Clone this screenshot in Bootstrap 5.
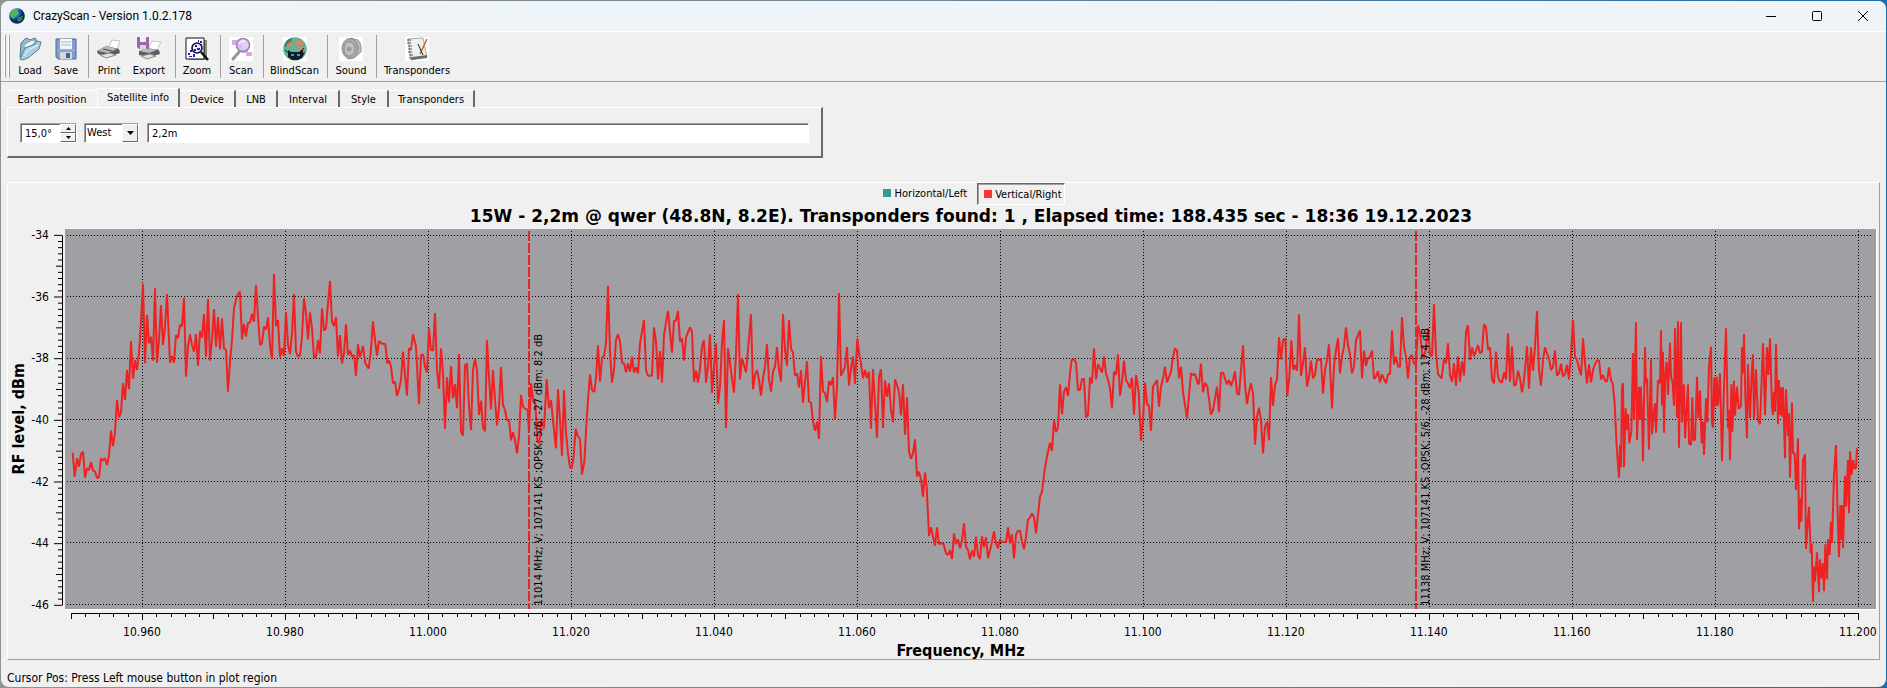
<!DOCTYPE html>
<html lang="en">
<head>
<meta charset="utf-8">
<meta name="viewport" content="width=device-width, initial-scale=1">
<title>CrazyScan - Version 1.0.2.178</title>
<link href="https://cdn.jsdelivr.net/npm/bootstrap@5.3.0/dist/css/bootstrap.min.css" rel="stylesheet">
<style>
  :root { --face:#f0f0f0; --shade:#a0a0a0; --dark:#696969; }
  body { background:linear-gradient(90deg,#8f9396 0,#6f8494 50%,#1f6ba8 100%); font-family:"DejaVu Sans Condensed","Noto Sans",sans-serif; font-size:11px; line-height:14px; color:#000; padding:1px; }
  .app-window { background:var(--face); border-radius:8px; overflow:hidden; min-height:calc(100vh - 2px); }
  .title-bar { height:31px; background:#eff4f9; border-bottom:1px solid #fff; font-family:Roboto,sans-serif; padding:0 0 1px 8px; }
  .title-bar h1 { font-size:12px; line-height:16px; font-weight:400; }
  .caption-btn { width:46px; height:28px; border:0; background:none; padding:0; }
  .tool-bar { height:50px; padding:3px 3px 3px; border-bottom:1px solid var(--shade); }
  .grip { width:2px; border-left:1px solid #fff; border-right:1px solid var(--shade); margin-right:2px; }
  .tool-btn { border:0; background:none; padding:1px 0 0; line-height:14px; color:#000; white-space:nowrap; }
  .tool-btn svg { display:block; margin:0 auto 3px; }
  .tool-sep { width:1px; background:var(--shade); margin:0 2px 0 4px; }
  .settings { padding:7px 7px 0 6px; }
  .tab-row { height:18px; }
  .tab-btn { border:0; border-top:1px solid #fff; border-right:2px solid var(--dark); background:var(--face); height:17px; padding:2px 0 0; color:#000; line-height:14px; flex:none; }
  .tab-btn.active { height:19px; border-left:1px solid #fff; position:relative; z-index:1; padding-bottom:2px; }
  .tab-btn.first { border-right:0; }
  .tab-page { width:816px; max-width:100%; height:51px; padding:15px 12px 0; border-top:1px solid #fff; border-left:1px solid #fff; border-right:2px solid var(--dark); border-bottom:2px solid var(--dark); }
  .sunken { background:#fff; border:1px solid; border-color:var(--shade) #fff #fff var(--shade); box-shadow:inset 1px 1px 0 var(--dark); height:20px; }
  .sunken input, .sunken select { border:0; background:transparent; outline:0; font:inherit; color:#000; padding:0 0 0 4px; width:100%; min-width:0; height:18px; appearance:none; border-radius:0; }
  .raised { background:var(--face); border:1px solid; border-color:#fff var(--dark) var(--dark) #fff; padding:0; display:flex; align-items:center; justify-content:center; }
  .chart-frame { border:1px solid; border-color:#fff var(--shade) var(--shade) #fff; margin:0 6px; }
  .legend-btn { border:1px solid transparent; background:none; height:22px; padding:0 2px 0 6px; color:#000; }
  .legend-btn i { display:inline-block; width:8px; height:8px; }
  .legend-btn.down { border-color:var(--dark) #fff #fff var(--dark); box-shadow:inset 1px 1px 0 var(--shade); padding-top:2px; }
  .chart-title { font-family:"DejaVu Sans",sans-serif; font-size:17px; line-height:22px; font-weight:700; margin:0; }
  .axis-title { font-size:16px; line-height:17px; font-weight:700; }
  .axis-y-title { width:21px; line-height:21px; writing-mode:vertical-rl; transform:rotate(180deg); }
  .axis-num { font-size:12px; line-height:14px; }
  .y-labels { width:26px; padding-right:6px; }
  .y-labels > span { height:0; display:flex; align-items:center; justify-content:flex-end; }
  .x-labels { padding-left:4.25%; padding-right:1%; height:14px; }
  .x-labels > span { width:0; display:flex; justify-content:center; }
  .plot { background:#a0a0a4; border-right:1px solid #fff; border-bottom:1px solid #fff; }
  .plot svg, .y-scale svg { position:absolute; inset:0; width:100%; height:100%; }
  .y-scale svg { overflow:visible; }
  .stretch * { vector-effect:non-scaling-stroke; }
  .grid-lines { stroke:#000; stroke-dasharray:1 2; fill:none; }
  .trace { stroke:#ee2222; stroke-width:2; fill:none; stroke-linejoin:bevel; }
  .marker { position:absolute; top:2px; bottom:0; width:18px; }
  .marker::before { content:""; position:absolute; left:0; top:0; bottom:0; width:2px; background:repeating-linear-gradient(#e02828 0 10px,transparent 10px 12px); }
  .marker span { position:absolute; left:4px; bottom:3px; writing-mode:vertical-rl; transform:rotate(180deg); white-space:nowrap; line-height:14px; font-size:11px; }
  .status { height:27px; padding:11px 6px 0; font-size:12px; }
</style>
</head>
<body>
<div class="app-window d-flex flex-column">
  <header class="title-bar d-flex align-items-center">
    <svg width="16" height="16" viewBox="0 0 16 16" aria-hidden="true"><defs><radialGradient id="globe" cx=".35" cy=".3"><stop offset="0" stop-color="#7fd0ff"/><stop offset=".5" stop-color="#2878c8"/><stop offset="1" stop-color="#0a2a66"/></radialGradient></defs><circle cx="8" cy="8" r="7.8" fill="url(#globe)"/><path d="M2 4 Q5 0 9 1 L8 4 L10 6 L6 8 L5 11 L2 9 L1 7Z" fill="#5cb548"/><path d="M10 9 L14 8 L13 12 L10 14 L8 12Z" fill="#2f8a3c"/></svg>
    <h1 class="mb-0 ms-2 ps-0 flex-grow-1">CrazyScan - Version 1.0.2.178</h1>
    <button class="caption-btn" aria-label="Minimize"><svg width="10" height="10" viewBox="0 0 10 10"><path d="M0 5.5H10" stroke="#000"/></svg></button>
    <button class="caption-btn" aria-label="Maximize"><svg width="10" height="10" viewBox="0 0 10 10"><rect x=".5" y=".5" width="9" height="9" rx="1" fill="none" stroke="#000"/></svg></button>
    <button class="caption-btn" aria-label="Close"><svg width="10" height="10" viewBox="0 0 10 10"><path d="M0 0L10 10M10 0L0 10" stroke="#000"/></svg></button>
  </header>

  <nav class="tool-bar d-flex" aria-label="Tools">
    <div class="grip"></div><div class="grip"></div>
    <button class="tool-btn" style="width:36px"><svg width="24" height="24" viewBox="0 0 24 24"><path d="M3 6 L8 1 L12 3 L17 1 L19 4 L19 9 L5 22 L2 20Z" fill="#8fb9cf" stroke="#54788c"/><path d="M6 8 L14 3 L18 5 L8 13Z" fill="#eef7fb" stroke="#8aa"/><path d="M2 22 L7 11 L17 7 L19 4 L23 5 L21 12 L10 21 L4 23Z" fill="#a9cfe2" stroke="#557d92"/><path d="M6 19 L10 13 L20 8" fill="none" stroke="#e9f7ff"/></svg>Load</button>
    <button class="tool-btn" style="width:36px"><svg width="24" height="24" viewBox="0 0 24 24"><path d="M2 2H22V22H4L2 20Z" fill="#7f9fcd" stroke="#4f688f"/><rect x="6" y="2" width="12" height="10" fill="#f4f7fa"/><path d="M7 5H17M7 8H17" stroke="#a9b4c2"/><rect x="6" y="15" width="12" height="7" fill="#d3d8dd"/><rect x="12" y="16" width="4" height="5" fill="#35639c"/><path d="M3 13H21" stroke="#9fbbe2"/></svg>Save</button>
    <div class="tool-sep"></div>
    <button class="tool-btn" style="width:36px"><svg width="24" height="24" viewBox="0 0 24 24"><path d="M11 12 L15 3 L23 4 L20 13Z" fill="#fff" stroke="#c5c5c5"/><path d="M0 14 L9 9 L22 12 L23 16 L11 20 L1 17Z" fill="#5c5c5c"/><path d="M1 14 L9 9 L20 12 L11 16Z" fill="#b9b9b9"/><path d="M3 18 L13 16 L19 18 L9 21Z" fill="#dfe3df" stroke="#888"/><path d="M6 12L15 14" stroke="#444"/></svg>Print</button>
    <button class="tool-btn" style="width:44px"><svg width="24" height="24" viewBox="0 0 24 24"><path d="M11 12 L15 4 L24 5 L20 13Z" fill="#fff" stroke="#c5c5c5"/><path d="M2 14 L9 11 L22 13 L23 17 L12 20 L2 18Z" fill="#5c5c5c"/><path d="M2 14 L9 11 L20 13 L12 16Z" fill="#b9b9b9"/><path d="M4 19 L13 17 L19 19 L10 22Z" fill="#dfe3df" stroke="#888"/><path d="M0 0H12V12H2L0 10Z" fill="#9a68a8"/><rect x="3" y="0" width="6" height="5" fill="#f6eaf8"/><rect x="3" y="8" width="6" height="4" fill="#e2cfe7"/></svg>Export</button>
    <div class="tool-sep"></div>
    <button class="tool-btn" style="width:38px"><svg width="24" height="24" viewBox="0 0 24 24"><path d="M4 3H22V23H4Z" fill="#888"/><path d="M1 1H19V22H1Z" fill="#fff" stroke="#111"/><path d="M3 16h2v2H3zM5 13h2v2H5zM15 4h2v2h-2zM13 3h1v2h-1zM4 19h3v1H4zM8 17h2v3H8zM16 7h1v2h-1z" fill="#1a1ae0"/><circle cx="12" cy="11" r="5" fill="#e5eaff" stroke="#111" stroke-width="1.600"/><path d="M10 8h2v2h-2zM12 11h3v2h-3zM9 12h2v2H9z" fill="#1a1ae0"/><path d="M16 15L23 23" stroke="#111" stroke-width="2.500"/></svg>Zoom</button>
    <div class="tool-sep"></div>
    <button class="tool-btn" style="width:36px"><svg width="24" height="24" viewBox="0 0 24 24"><rect width="24" height="24" fill="#fff"/><path d="M3 3h5v4h5v5h6v3h4v4h-6v-3h-5v-5H7V8H3z" fill="#dfa5ec"/><path d="M10 15L4 22" stroke="#9c9099" stroke-width="3" stroke-linecap="round"/><circle cx="14" cy="8" r="6.5" fill="#dcc4f4" fill-opacity=".8" stroke="#8f8ba8" stroke-width="1.6"/><path d="M10 7Q12 3 16 4" stroke="#fff" fill="none"/></svg>Scan</button>
    <div class="tool-sep"></div>
    <button class="tool-btn" style="width:57px"><svg width="24" height="24" viewBox="0 0 24 24"><rect width="24" height="24" fill="#fff"/><circle cx="12" cy="12" r="11.8" fill="#62b296"/><path d="M1 9Q3 2 9 1L8 5L4 10Z" fill="#437d65"/><path d="M3 8l4-3 4 0-2 3-4 2zM12 4l6-1 3 3-4 2-4-1zM14 9l5 0 3 3-5 0z" fill="#dd8560"/><path d="M5 13l3 2h8l4-3v4l2-1-3 6-4 2h-6l-4-3z" fill="#101e24"/><path d="M8 17h3v2H8zM14 17h3v2h-3z" fill="#2f9cf0"/><path d="M2 13l5 4M21 11l-4 5" stroke="#101e24"/></svg>BlindScan</button>
    <div class="tool-sep"></div>
    <button class="tool-btn" style="width:42px"><svg width="24" height="24" viewBox="0 0 24 24"><rect width="24" height="24" fill="#fff"/><path d="M12 1 L19 3 Q23 7 22 15 L15 21 L9 22Z" fill="#b9b9b9" stroke="#999"/><ellipse cx="11" cy="11.500" rx="8" ry="10" fill="#a9aaac" stroke="#8b8b8b"/><ellipse cx="10.500" cy="12" rx="5.500" ry="7" fill="#c0c1c3" stroke="#8b8b8b"/><circle cx="10" cy="12" r="2.500" fill="#9a9c9e"/></svg>Sound</button>
    <div class="tool-sep"></div>
    <button class="tool-btn" style="width:76px"><svg width="24" height="24" viewBox="0 0 24 24"><rect width="24" height="24" fill="#fff"/><path d="M3 2L18 1L22 20L6 23Z" fill="#edf0ee" stroke="#aaa"/><path d="M6 23L22 21V18L7 20Z" fill="#657066"/><path d="M2 3h4M2 6h4M3 9h4M3 12h4M3 15h4M4 18h4M4 21h4" stroke="#555"/><path d="M22 2L15 17" stroke="#c2602d" stroke-width="1.500"/><path d="M13 7L18 18" stroke="#222"/></svg>Transponders</button>
  </nav>

  <section class="settings">
    <div class="tab-row d-flex align-items-end" role="tablist">
      <button role="tab" class="tab-btn first" style="width:90px">Earth position</button>
      <button role="tab" class="tab-btn active" aria-selected="true" style="width:83px">Satellite info</button>
      <button role="tab" class="tab-btn" style="width:56px">Device</button>
      <button role="tab" class="tab-btn" style="width:42px">LNB</button>
      <button role="tab" class="tab-btn" style="width:62px">Interval</button>
      <button role="tab" class="tab-btn" style="width:49px">Style</button>
      <button role="tab" class="tab-btn" style="width:86px">Transponders</button>
    </div>
    <div class="tab-page d-flex" role="tabpanel">
      <div class="sunken d-flex" style="width:57px">
        <input type="text" aria-label="Orbital position" value="15,0°">
        <div class="d-flex flex-column flex-shrink-0 h-100" style="width:16px">
          <button class="raised flex-fill" aria-label="Up"><svg width="5" height="3" viewBox="0 0 5 3"><path d="M0 3L2.500 0L5 3Z"/></svg></button>
          <button class="raised flex-fill" aria-label="Down"><svg width="5" height="3" viewBox="0 0 5 3"><path d="M0 0H5L2.500 3Z"/></svg></button>
        </div>
      </div>
      <div class="sunken d-flex" style="width:55px;margin-left:7px">
        <select aria-label="Hemisphere" style="padding-left:2px"><option>West</option><option>East</option></select>
        <span class="raised flex-shrink-0" style="width:16px"><svg width="7" height="4" viewBox="0 0 7 4"><path d="M0 0H7L3.500 4Z"/></svg></span>
      </div>
      <div class="sunken flex-fill" style="margin-left:8px"><input type="text" aria-label="Antenna" value="2,2m"></div>
    </div>
  </section>

  <main class="chart-frame flex-grow-1 d-flex flex-column mt-4">
    <div class="d-flex justify-content-center" style="padding-left:54px;gap:7px">
      <button class="legend-btn"><i style="background:#339999"></i> Horizontal/Left</button>
      <button class="legend-btn down"><i style="background:#ff3333"></i> Vertical/Right</button>
    </div>
    <div class="flex-grow-1 d-flex">
      <div class="d-flex align-items-center" style="padding-bottom:26px"><div class="axis-title axis-y-title">RF level, dBm</div></div>
      <div class="flex-grow-1 d-flex flex-column" style="margin-right:2px">
        <h2 class="chart-title text-center" style="padding-left:36px;margin-bottom:2px">15W - 2,2m @ qwer (48.8N, 8.2E). Transponders found: 1 , Elapsed time: 188.435 sec - 18:36 19.12.2023</h2>
        <div class="d-flex flex-grow-1">
          <div class="y-labels axis-num d-flex flex-column justify-content-between" style="margin:6px 0 5px">
            <span>-34</span><span>-36</span><span>-38</span><span>-40</span><span>-42</span><span>-44</span><span>-46</span>
          </div>
          <div class="y-scale position-relative" style="width:10px"><svg class="stretch" viewBox="0 0 10 1140" preserveAspectRatio="none" shape-rendering="crispEdges"><path id="yTicks" stroke="#000" fill="none"/></svg></div>
          <div class="plot flex-grow-1 position-relative">
            <svg class="stretch" viewBox="0 0 5433 1140" preserveAspectRatio="none">
              <path id="gridX" class="grid-lines" shape-rendering="crispEdges"/><path id="gridY" class="grid-lines" shape-rendering="crispEdges"/>
              <g class="trace">
                <polyline transform="translate(-195 -57)" points="218,728 224,800 231,745 237,770 243,732 249,725 255,803 261,775 267,780 273,757 279,782 285,784 291,804 297,802 303,745 309,752 315,745 321,765 327,737 333,662 339,708 345,668 351,570 357,622 363,608 369,519 375,570 381,480 387,538 393,393 399,507 405,450 411,480 417,430 421,370 429,222 435,460 441,315 447,400 453,380 459,452 465,235 471,458 477,390 483,285 489,405 495,350 501,252 510,458 516,438 522,458 528,375 534,384 540,345 546,348 552,264 558,500 564,410 570,373 576,405 582,425 588,372 594,467 600,363 606,383 612,312 618,440 624,267 630,452 636,390 642,297 648,410 654,321 660,418 666,325 672,415 678,420 684,545 690,455 696,390 702,295 711,258 720,245 726,388 732,342 738,380 744,338 750,338 756,312 762,335 768,225 774,320 780,405 786,400 792,350 798,358 804,322 810,405 816,448 822,192 828,348 834,330 840,442 846,415 852,437 858,307 864,405 870,432 876,370 882,252 888,425 894,440 900,436 906,380 912,265 918,310 924,388 930,307 936,355 942,442 948,442 954,390 960,430 966,295 972,362 978,355 984,280 990,213 996,335 1002,348 1008,322 1014,440 1020,375"/>
                <polyline transform="translate(825 -27)" points="0,345 6,430 12,400 18,313 24,405 30,392 36,410 42,405 48,467 54,373 60,412 69,378 76,430 86,446 92,400 99,304 105,360 111,407 117,363 124,370 136,373 142,430 148,422 153,440 159,490 165,485 171,528 177,508 183,480 189,395 195,465 201,527 207,385 213,390 219,343 228,380 237,553 243,405 249,403 255,440 261,457 267,325 273,390 279,392 285,279 291,450 297,506 303,385 309,460 315,626 321,472 327,547 333,438 339,535 345,493 351,565 357,402 363,635 369,647 375,437 381,430 387,560 393,630 399,450 405,417 411,450 417,585 423,542 429,622 435,634 441,361 447,470 453,568 459,450 465,540 471,616 477,560 483,441 489,555 495,570 501,602 507,598 513,661 519,637 525,660 531,700 537,650 543,525 549,560 555,566 563,570 567,635 573,490 580,545 586,550 592,660 598,672 604,600 612,625 620,478 627,565 633,540 640,610 648,685 654,508 660,600 666,707 672,510 678,640 684,700 690,743 695,745 701,710 707,626 713,648 720,657 726,764 733,725 740,600 744,540 750,463 756,510 763,516 768,475 774,376 780,485 786,412 792,410 798,370 804,198 810,395 816,488 822,450 828,360 834,343 840,365 846,428 852,430 858,457 864,430 870,455 876,410 882,458 888,442 894,460 900,370 912,300 918,450 924,467 936,467 942,322 948,365 954,478 960,393 966,488 972,345 984,273"/>
                <polyline transform="translate(1485 -27)" points="324,273 336,398 342,303 348,302 354,273 360,365 366,355 372,422 378,352 390,322 396,335 402,485 408,452 414,488 420,445 426,380 432,361 438,488 444,440 450,343 456,518 462,440 468,370 474,551 480,500 486,370 492,300 498,624 504,385 510,430 516,475 522,518 528,400 534,222 540,478 546,415 552,435 558,457 564,390 573,283 579,508 585,465 591,450 597,480 603,527 609,475 615,440 621,373 627,480 633,515 639,455 645,440 651,381 657,450 663,485 669,283 675,390 681,437 687,300 693,385 699,398 705,467 711,460 717,502 723,451 729,548 735,485 741,424 747,545 753,548 759,605 765,632 771,605 777,657 783,409 789,515 795,518 801,547 807,483 813,495 819,472 825,600 831,500 837,219 843,467 849,455 855,440 861,381 867,497 873,445 879,409 885,491 892,355 898,405 903,430 909,475 915,450 921,475 927,455 933,626 939,447 951,653 957,470 963,448 969,624 975,482 981,530 987,490 993,570 999,607 1005,478 1011,495 1017,515"/>
                <polyline transform="translate(2445 93)" points="57,395 63,466 69,373 75,524 81,412 87,575 93,597 99,580 105,538 111,650 117,635 123,660 129,710 135,638 140,680 147,828 153,802 165,857 171,802 177,852 190,850 198,880 204,885 210,870 216,897 222,820 228,852 234,838 240,865 246,840 252,790 258,860 264,870 270,898 276,872 282,890 288,830 294,885 300,897 306,829 312,862 318,832 324,895 330,870 336,845 342,814 348,850 354,865 360,838 366,846 378,847 384,802 390,850 396,823 402,895 408,825 414,812 420,812 426,845 432,867 438,830 444,780 450,772 456,760 462,772 468,820 474,765 480,710 486,695 495,622 504,575 510,548 516,573 522,480 528,516 534,503 540,373 546,463 552,395 558,382 564,408 570,340 575,300 581,297 588,307 594,390 600,390 606,357 612,357 618,472 624,465 630,352 636,370 642,265 648,358 654,313 660,325 666,338 672,290 678,340 684,360 690,385 696,445 702,335 708,345 714,283 720,407 726,365 732,302 738,360 744,370 750,385 756,353 762,464 768,345 776,395 783,542 789,480 795,367 801,432 807,438 813,512 819,380 831,360 837,440 843,380 850,350 855,320 861,367 873,335 879,290 885,265 891,272 897,355 903,320 909,395 921,475 933,340 939,345 945,342 954,373 957,370 963,311 969,397 975,368 982,380 993,464 999,450 1005,415 1011,380 1017,457 1023,338 1029,338 1041,373 1047,360 1053,378 1059,360 1065,334 1071,400 1077,405"/>
                <polyline transform="translate(2925 93)" points="597,405 609,256 615,375 621,432 627,395 633,370 639,400 645,554 651,470 657,443 663,480 669,580 675,500 681,485 687,541 693,352 699,437 705,375 711,358 717,232 723,298 729,240 736,235 742,408 748,350 754,241 760,330 765,315 771,332 777,163 783,348 789,310 795,262 801,380 807,350 813,302 819,355 825,345 831,298 837,300 843,297 849,401 855,330 861,300 867,253 876,445 882,320 888,270 894,235 900,340 906,290 912,260 918,202 924,255 930,285 936,340 942,320 948,240 960,211 966,355 972,272 978,318 984,295 990,290 996,272 1002,357 1008,350 1014,333 1020,367 1026,343 1032,357 1038,370 1044,343 1050,342 1056,211 1062,313 1068,290 1074,320 1080,320 1086,171 1092,260 1098,290 1104,355 1110,290 1116,285 1122,310 1128,315"/>
                <polyline transform="translate(4005 -27)" points="48,435 54,316 60,340 66,395 72,418 78,380 84,325 90,405 96,408 102,252 108,400 114,462 125,475 132,418 138,430 144,370 150,465 156,485 162,430 168,497 174,409 180,485 186,424 192,466 198,335 204,316 210,420 216,382 222,409 234,375 240,400 246,395 252,313 258,320 264,390 270,382 276,478 282,490 288,395 294,470 300,485 306,488 312,457 318,478 324,340 330,485 336,379 342,497 348,493 354,452 360,475 366,517 372,480 381,379 387,506 393,382 399,452 405,380 411,273 417,450 423,497 429,420 435,382 441,400 447,415 453,450 459,440 465,391 471,467 477,460 483,432 489,470 495,462 501,435 507,478 513,400 519,300 525,410 531,420 537,445 543,466 549,355 555,430 561,490 567,433 573,487 579,450 585,432 591,422 597,420"/>
                <polyline transform="translate(4485 93)" points="117,300 123,358 129,345 135,362 141,365 147,322 153,360 158,370 164,430 170,560 177,653 180,555 183,622 186,380 189,370 192,622 197,445 201,510 204,462 208,550 214,515 219,280 222,480 228,187 231,541 237,380 240,480 242,380 246,450 249,604 255,262 258,370 261,355 267,569 273,298 276,523 282,450 285,430 288,518 294,360 300,370 303,211 306,437 309,275 312,518 316,340 320,305 324,405 330,248 333,350 338,370 342,437 345,205 351,473 354,184 357,563 363,187 366,487 372,373 375,535 381,430 384,373 387,550 393,555 397,412 400,540 405,540 411,350 415,475 420,392 425,550 429,485 432,585 438,415 442,487 447,320 453,260 456,490 459,503 463,352 467,440 470,350 474,437 480,340 486,604 492,380 498,205 504,505 507,450 510,601 514,373 517,515 522,362 525,467 531,380 536,447 543,437 546,262 549,340 552,223 556,410 561,535 564,313 570,475 575,340 579,283 582,478 588,328 594,480 600,493 609,250 615,466 621,262 625,345 630,235 636,440 639,465 642,395 645,455 648,253 654,493 657,360 660,465 663,382 666,470 669,382 675,595 678,388 684,527 687,460 690,653 696,428 699,580 704,580 708,691 714,535 717,808 722,715 724,785 729,600 735,583 738,867 743,790 747,740 752,880 755,850 759,1025 762,920 765,965 771,877 777,997 780,898 785,955 789,910 792,994 796,853 801,958 804,838 809,885 813,785 816,848 822,645 828,555 832,735 837,892 841,735 845,840 846,735 849,865 855,647 858,740 864,600 867,760 870,574 875,645 879,600 884,627 888,622 891,565"/>
              </g>
            </svg>
            <div class="marker" style="left:25.55%"><span>11014 MHz; V; 107141 KS ;QPSK; 5/6; -27 dBm; 8.2 dB</span></div>
            <div class="marker" style="left:74.55%"><span>11138 MHz; V; 107141 KS ;QPSK; 5/6; -28 dBm; 17.4 dB</span></div>
          </div>
        </div>
        <div style="padding:2px 1px 3px 36px">
          <svg class="stretch d-block w-100" height="9" viewBox="0 0 5433 9" preserveAspectRatio="none" shape-rendering="crispEdges"><path id="xTicks" stroke="#000" fill="none"/></svg>
          <div class="x-labels axis-num d-flex justify-content-between mt-1">
            <span>10.960</span><span>10.980</span><span>11.000</span><span>11.020</span><span>11.040</span><span>11.060</span><span>11.080</span><span>11.100</span><span>11.120</span><span>11.140</span><span>11.160</span><span>11.180</span><span>11.200</span>
          </div>
        </div>
        <div class="axis-title text-center" style="padding-left:15px">Frequency, MHz</div>
      </div>
    </div>
  </main>
  <footer class="status">Cursor Pos: Press Left mouse button in plot region</footer>
</div>
<script src="https://cdn.jsdelivr.net/npm/bootstrap@5.3.0/dist/js/bootstrap.bundle.min.js"></script>
<script>
  // The plot is drawn in thirds of a unit: 5433 x 1140, stretched to its box.
  const X0 = 18, X1 = 5380, Y0 = 19, Y1 = 1126;
  const fx = mhz => X0 + (mhz - 10950) / 250 * (X1 - X0);
  const fy = db => Y0 + (-34 - db) / 12 * (Y1 - Y0);
  const set = (id, d) => document.getElementById(id).setAttribute('d', d);
  let gx = '', gy = '', tx = `M${X0} 1H${X1}`, ty = `M7.5 ${Y0}V${Y1}`;
  for (let f = 10960; f <= 11200; f += 20) gx += `M${fx(f)} 6V1134`;
  for (let d = -34; d >= -46; d -= 2) gy += `M6 ${fy(d)}H5421`;
  for (let f = 10950; f <= 11200; f += 2) tx += `M${fx(f)} 1V${(f - 10960) % 20 === 0 ? 8 : 5}`;
  for (let f = 10950; f <= 11200; f += 20) tx += `M${fx(f)} 1V7`;
  for (let i = 0; i <= 60; i++) ty += `M7 ${fy(-34 - i / 5)}H${i % 10 === 0 ? -1 : i % 5 === 0 ? 1 : 3}`;
  set('gridX', gx); set('gridY', gy); set('xTicks', tx); set('yTicks', ty);
</script>
</body>
</html>
